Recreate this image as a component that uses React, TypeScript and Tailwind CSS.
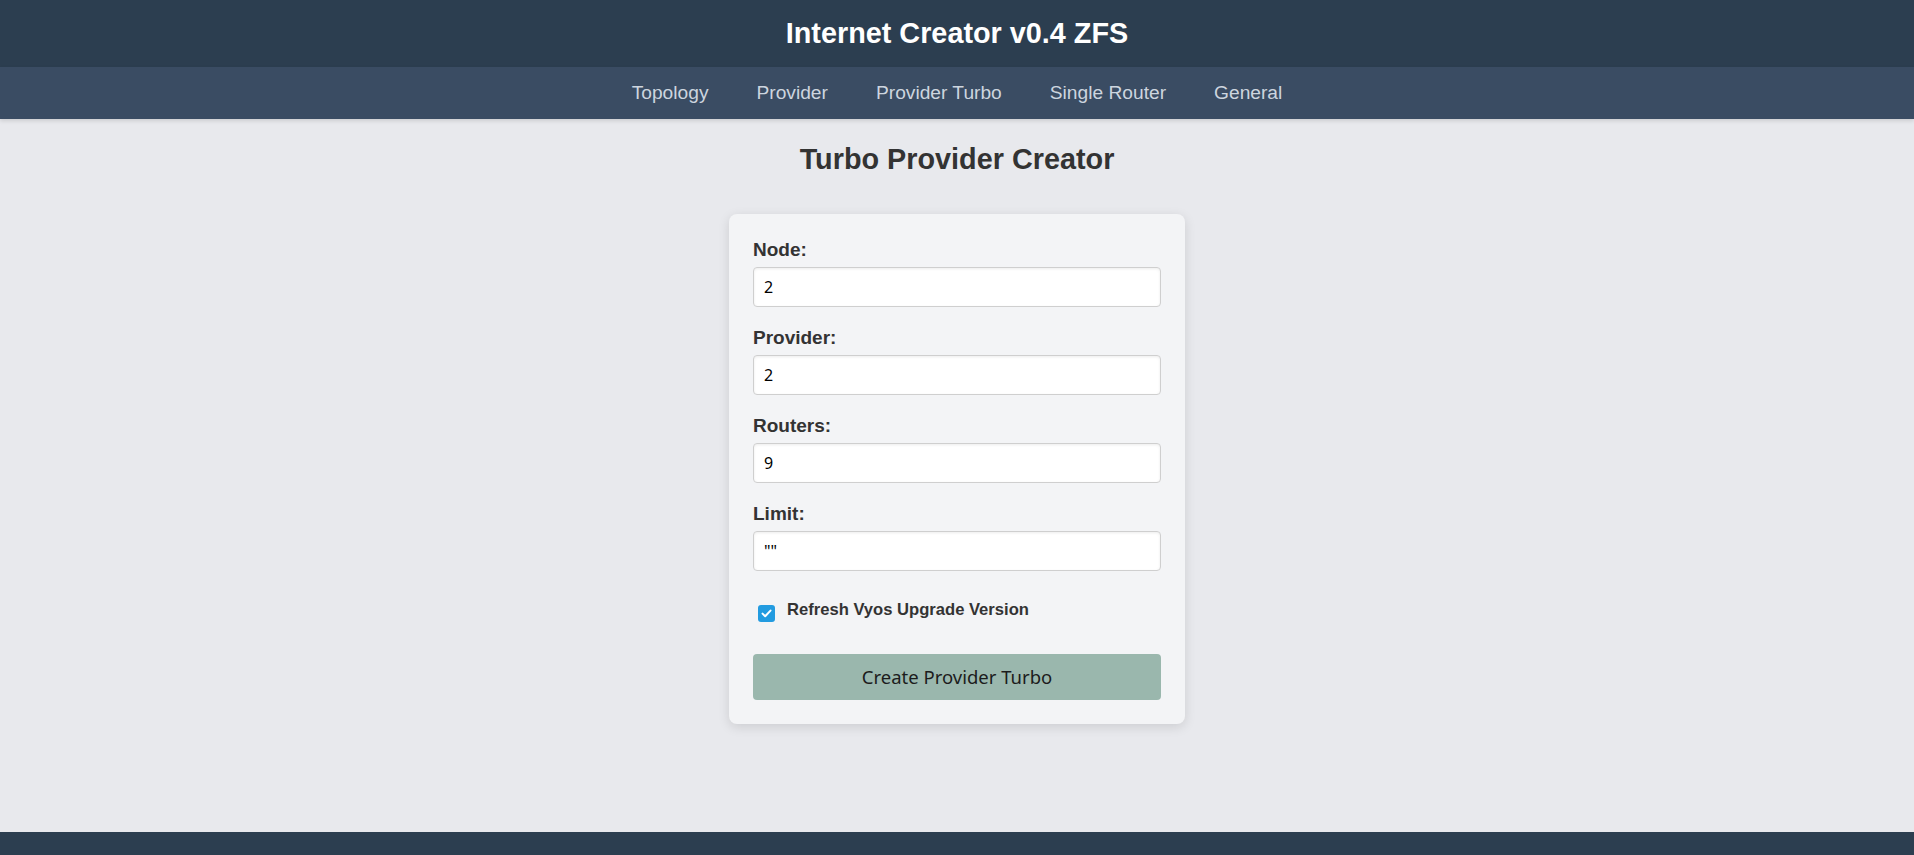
import React from "react";

const fields = [
  { label: "Node:", value: "2" },
  { label: "Provider:", value: "2" },
  { label: "Routers:", value: "9" },
  { label: "Limit:", value: '""' },
];

export default function App() {
  return (
    <div
      className="min-h-[855px] flex flex-col bg-[#e8e9ed]"
      style={{ fontFamily: '"Liberation Sans", Arial, sans-serif' }}
    >
      <header className="h-[67px] bg-[#2c3e50] flex items-center justify-center">
        <h1 className="text-[28.8px] leading-[33px] font-bold text-white">Internet Creator v0.4 ZFS</h1>
      </header>
      <nav className="h-[52px] bg-[#3a4c63] flex items-center justify-center shadow-[0_2px_4px_rgba(0,0,0,0.12)] relative">
        {["Topology", "Provider", "Provider Turbo", "Single Router", "General"].map((l) => (
          <a key={l} className="px-[24px] text-[19.2px] text-[#cdd5df] cursor-pointer">
            {l}
          </a>
        ))}
      </nav>
      <main className="flex-1 flex flex-col items-center">
        <h2 className="mt-[24px] text-[28.8px] leading-[33px] font-bold text-[#333333]">Turbo Provider Creator</h2>
        <div className="mt-[38px] w-[456px] bg-[#f3f4f6] rounded-[8px] px-[24px] pt-[25px] pb-[24px] shadow-[0_3px_12px_rgba(0,0,0,0.12)]">
          {fields.map((f) => (
            <div key={f.label} className="mb-[20px]">
              <label className="block text-[19px] leading-[22px] font-bold text-[#333333] mb-[6px]">{f.label}</label>
              <div
                className="h-[40px] w-full bg-white border border-[#cfcfcf] rounded-[4px] px-[10px] flex items-center text-[16px] text-black shadow-[inset_0_1px_3px_rgba(0,0,0,0.08)]"
                style={{ fontFamily: '"Noto Sans", "DejaVu Sans", sans-serif' }}
              >
                {f.value}
              </div>
            </div>
          ))}
          <div className="mt-[29px] flex items-start">
            <div className="mt-[5px] ml-[5px] w-[17px] h-[17px] rounded-[3px] bg-[#229be0] flex items-center justify-center">
              <svg width="11" height="9" viewBox="0 0 11 9" fill="none">
                <path d="M1.5 4.6 L4.2 7.2 L9.5 1.6" stroke="white" strokeWidth="2" strokeLinecap="round" strokeLinejoin="round" />
              </svg>
            </div>
            <span className="ml-[12px] text-[16.6px] leading-[20px] font-bold text-[#333333]">Refresh Vyos Upgrade Version</span>
          </div>
          <button
            className="mt-[32px] w-full h-[46px] rounded-[4px] bg-[#9ab7ad] text-[18.5px] text-[#1c1c1c] flex items-center justify-center"
            style={{ fontFamily: '"Noto Sans", "DejaVu Sans", sans-serif' }}
          >
            Create Provider Turbo
          </button>
        </div>
      </main>
      <footer className="h-[23px] bg-[#2c3e50]" />
    </div>
  );
}
